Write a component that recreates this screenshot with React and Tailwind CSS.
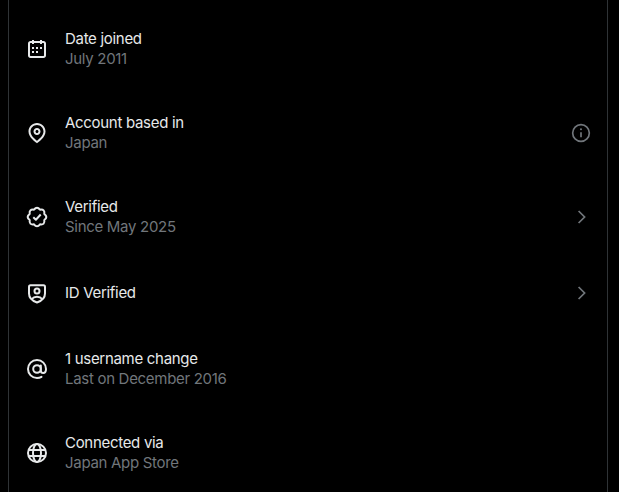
import React from 'react';

const CalendarIcon = () => (
  <svg viewBox="0 0 24 24" className="w-6 h-6 fill-[#e7e9ea]">
    <path d="M7 4V3h2v1h6V3h2v1h1.5C19.89 4 21 5.12 21 6.5v12c0 1.38-1.11 2.5-2.5 2.5h-13C4.12 21 3 19.88 3 18.5v-12C3 5.12 4.12 4 5.5 4H7zm0 2H5.5c-.27 0-.5.22-.5.5v12c0 .28.23.5.5.5h13c.28 0 .5-.22.5-.5v-12c0-.28-.22-.5-.5-.5H17v1h-2V6H9v1H7V6zm0 6h2v-2H7v2zm0 4h2v-2H7v2zm4-4h2v-2h-2v2zm0 4h2v-2h-2v2zm4-4h2v-2h-2v2z" />
  </svg>
);

const PinIcon = () => (
  <svg viewBox="0 0 24 24" className="w-6 h-6 fill-[#e7e9ea]">
    <path d="M12 7c-1.93 0-3.5 1.57-3.5 3.5S10.07 14 12 14s3.5-1.57 3.5-3.5S13.93 7 12 7zm0 5c-.827 0-1.5-.673-1.5-1.5S11.173 9 12 9s1.5.673 1.5 1.5S12.827 12 12 12zm0-10c-4.687 0-8.5 3.813-8.5 8.5 0 5.967 7.621 11.116 7.945 11.332l.555.37.555-.37c.324-.216 7.945-5.365 7.945-11.332C20.5 5.813 16.687 2 12 2zm0 17.77c-1.665-1.241-6.5-5.196-6.5-9.27C5.5 6.916 8.416 4 12 4s6.5 2.916 6.5 6.5c0 4.073-4.835 8.028-6.5 9.27z" />
  </svg>
);

// scalloped outline of the verified badge, 8 lobes
const point = (r, deg) => {
  const a = (deg * Math.PI) / 180;
  return `${(12 + r * Math.cos(a)).toFixed(2)} ${(12 + r * Math.sin(a)).toFixed(2)}`;
};
const scallop = [...Array(8)].reduce(
  (d, _, i) => `${d} Q${point(11.4, i * 45 - 90)} ${point(7.9, i * 45 - 67.5)}`,
  `M${point(7.9, -112.5)}`,
) + ' Z';

const BadgeIcon = () => (
  <svg viewBox="0 0 24 24" fill="none" stroke="#e7e9ea" strokeWidth="2" strokeLinejoin="round" className="w-6 h-6">
    <path d={scallop} />
    <path d="M8.300 12.200l2.600 2.500 4.800-5.200" />
  </svg>
);

const ShieldIcon = () => (
  <svg viewBox="0 0 24 24" fill="none" stroke="#e7e9ea" strokeWidth="2" className="w-6 h-6">
    <path d="M4 6C4 4.900 4.700 4.300 5.500 4.300h13c.8 0 1.500.6 1.500 1.700v6.500c0 4.300-3.600 7.500-8 9-4.400-1.500-8-4.700-8-9V6z" />
    <circle cx="12" cy="10" r="2.500" />
    <path d="M6.800 18c1.200-1.500 3-2.300 5.200-2.300s4 .8 5.200 2.300" />
  </svg>
);

const AtIcon = () => (
  <svg viewBox="0 0 24 24" fill="none" stroke="#e7e9ea" strokeWidth="2" strokeLinecap="round" className="w-6 h-6">
    <circle cx="12" cy="12" r="3.800" />
    <path d="M15.800 8.500V13.500c0 1.500 1 2.500 2.400 2.500s2.800-1.200 2.800-4c0-5-4-9-9-9s-9 4-9 9 4 9 9 9c1.700 0 3.200-.4 4.500-1.200" />
  </svg>
);

const GlobeIcon = () => (
  <svg viewBox="0 0 24 24" fill="none" stroke="#e7e9ea" strokeWidth="2" className="w-6 h-6">
    <circle cx="12" cy="12" r="9" />
    <ellipse cx="12" cy="12" rx="4" ry="9" />
    <path d="M3.500 9h17M3.500 15h17" />
  </svg>
);

const InfoIcon = () => (
  <svg viewBox="0 0 24 24" className="w-5 h-5" fill="none" stroke="#71767b" strokeWidth="2">
    <circle cx="12" cy="12" r="10" />
    <path d="M12 11v6" />
    <circle cx="12" cy="7.500" r="1.250" fill="#71767b" stroke="none" />
  </svg>
);

const Chevron = () => (
  <svg viewBox="0 0 20 20" className="w-5 h-5" fill="none" stroke="#71767b" strokeWidth="1.700">
    <path d="M7.600 4l6 6-6 6" />
  </svg>
);

const rows = [
  { icon: <CalendarIcon />, title: 'Date joined', sub: 'July 2011' },
  { icon: <PinIcon />, title: 'Account based in', sub: 'Japan', right: <InfoIcon /> },
  { icon: <BadgeIcon />, title: 'Verified', sub: 'Since May 2025', right: <Chevron /> },
  { icon: <ShieldIcon />, title: 'ID Verified', right: <Chevron /> },
  { icon: <AtIcon />, title: '1 username change', sub: 'Last on December 2016' },
  { icon: <GlobeIcon />, title: 'Connected via', sub: 'Japan App Store' },
];

export default function App() {
  return (
    <div className="h-[492px] w-[619px] overflow-hidden bg-black font-['Inter',sans-serif] tracking-[-0.3px]">
      <div className="ml-2 h-full w-[600px] border-x border-[#2f3336] pt-[7px]">
        {rows.map((row) => (
          <div key={row.title} className="flex items-center gap-4 px-4 py-[22px]">
            <div className="shrink-0">{row.icon}</div>
            <div className="min-w-0 flex-1">
              <div className="text-[15px] leading-5 text-[#e7e9ea]">{row.title}</div>
              {row.sub && <div className="text-[15px] leading-5 text-[#71767b]">{row.sub}</div>}
            </div>
            {row.right}
          </div>
        ))}
      </div>
    </div>
  );
}
